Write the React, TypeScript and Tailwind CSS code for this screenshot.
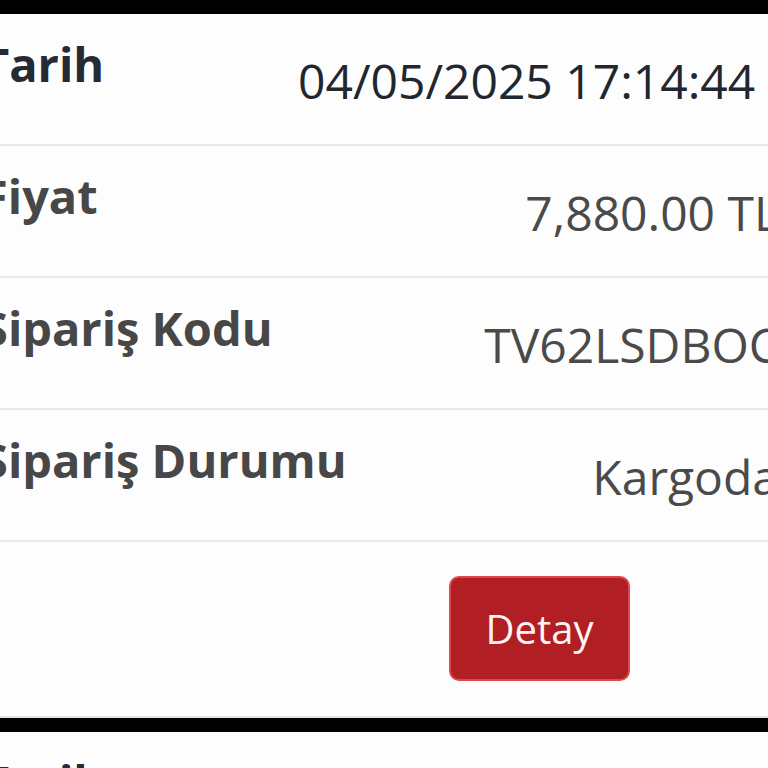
import React from 'react';

interface Row {
  label: string;
  value: string;
}

const orders: { id: string; rows: Row[] }[] = [
  {
    id: 'a',
    rows: [
      { label: 'Tarih', value: '04/05/2025 17:14:44' },
      { label: 'Fiyat', value: '7,880.00 TL' },
      { label: 'Sipariş Kodu', value: 'TV62LSDBOC' },
      { label: 'Sipariş Durumu', value: 'Kargoda' },
    ],
  },
  {
    id: 'b',
    rows: [
      { label: 'Tarih', value: '03/05/2025 11:02:17' },
      { label: 'Fiyat', value: '2,450.00 TL' },
      { label: 'Sipariş Kodu', value: 'TV58KQWZRA' },
      { label: 'Sipariş Durumu', value: 'Teslim Edildi' },
    ],
  },
];

const OrderCard = ({ rows }: { rows: Row[] }) => {
  return (
    <div className="-ml-[30px] w-[823px] shrink-0 bg-[#fdfdfd]">
      {rows.map((row, index) => {
        const first = index === 0;
        return (
          <div
            key={row.label}
            className="grid h-[132px] grid-cols-[316px_1fr] border-b-2 border-[#e9e9e9] pr-[14px] pl-[12px]"
          >
            <div
              className={`pt-[14px] text-[47px] font-bold leading-[72px] whitespace-nowrap ${
                first ? 'text-[#262a33]' : 'text-[#474747]'
              }`}
            >
              {row.label}
            </div>
            <div
              className={`self-center pt-[4px] text-right text-[48px] leading-[72px] whitespace-nowrap ${
                first ? 'pr-[24px] font-medium text-[#22262e]' : 'text-[#4a4a4a]'
              }`}
            >
              {row.value}
            </div>
          </div>
        );
      })}

      {/* Detail button */}
      <div className="grid grid-cols-[318px_1fr] border-b-2 border-[#e4e4e4] pr-[14px] pl-[12px] pt-[34px] pb-[35px]">
        <div />
        <div className="flex justify-center">
          <button
            type="button"
            className="h-[105px] w-[181px] rounded-[10px] border-2 border-[#dc4a4e] bg-[#b11f24] text-[40px] leading-none text-[#fff4f4]"
          >
            Detay
          </button>
        </div>
      </div>
    </div>
  );
};

export default function App() {
  return (
    <div
      className="flex h-[768px] w-[768px] flex-col gap-[14px] overflow-hidden bg-black pt-[14px]"
      style={{ fontFamily: '"Open Sans", "Noto Sans", sans-serif' }}
    >
      {orders.map(order => (
        <OrderCard key={order.id} rows={order.rows} />
      ))}
    </div>
  );
}
